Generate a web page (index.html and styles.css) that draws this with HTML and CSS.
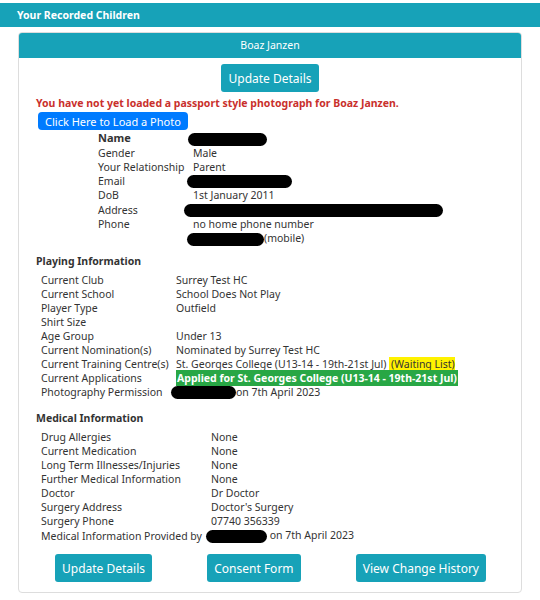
FILE: index.html
```html
<!DOCTYPE html>
<html lang="en">
<head>
    <meta charset="UTF-8">
    <title>Your Recorded Children</title>
    <link rel="stylesheet" href="styles.css">
</head>
<body>
    <div class="panel">
        <div class="panel-heading">Your Recorded Children</div>
        <div class="child-card">
            <div class="card-header">Boaz Janzen</div>
            <div class="card-body">
                <div class="center">
                    <button class="btn">Update Details</button>
                </div>
                <p class="warning">You have not yet loaded a passport style photograph for Boaz Janzen.</p>
                <button class="btn-photo">Click Here to Load a Photo</button>

                <table class="details">
                    <tr><td class="lbl"><strong>Name</strong></td><td><span class="redact r-name"></span></td></tr>
                    <tr><td class="lbl">Gender</td><td>Male</td></tr>
                    <tr><td class="lbl">Your Relationship</td><td>Parent</td></tr>
                    <tr><td class="lbl">Email</td><td><span class="redact r-email"></span></td></tr>
                    <tr><td class="lbl">DoB</td><td>1st January 2011</td></tr>
                    <tr><td class="lbl">Address</td><td><span class="redact r-address"></span></td></tr>
                    <tr><td class="lbl">Phone</td><td>no home phone number</td></tr>
                    <tr><td class="lbl"></td><td><span class="redact r-mobile"></span>(mobile)</td></tr>
                </table>

                <h4 class="playing-title">Playing Information</h4>
                <table class="info playing">
                    <tr><td class="lbl">Current Club</td><td>Surrey Test HC</td></tr>
                    <tr><td class="lbl">Current School</td><td>School Does Not Play</td></tr>
                    <tr><td class="lbl">Player Type</td><td>Outfield</td></tr>
                    <tr><td class="lbl">Shirt Size</td><td></td></tr>
                    <tr><td class="lbl">Age Group</td><td>Under 13</td></tr>
                    <tr><td class="lbl">Current Nomination(s)</td><td>Nominated by Surrey Test HC</td></tr>
                    <tr><td class="lbl">Current Training Centre(s)</td><td>St. Georges College (U13-14 - 19th-21st Jul) <span class="waiting">(Waiting List) </span></td></tr>
                    <tr><td class="lbl">Current Applications</td><td><span class="applied">Applied for St. Georges College (U13-14 - 19th-21st Jul)</span></td></tr>
                    <tr><td class="lbl">Photography Permission</td><td><span class="redact r-photo"></span>on 7th April 2023</td></tr>
                </table>

                <h4 class="medical-title">Medical Information</h4>
                <table class="info medical">
                    <tr><td class="lbl">Drug Allergies</td><td>None</td></tr>
                    <tr><td class="lbl">Current Medication</td><td>None</td></tr>
                    <tr><td class="lbl">Long Term Illnesses/Injuries</td><td>None</td></tr>
                    <tr><td class="lbl">Further Medical Information</td><td>None</td></tr>
                    <tr><td class="lbl">Doctor</td><td>Dr Doctor</td></tr>
                    <tr><td class="lbl">Surgery Address</td><td>Doctor's Surgery</td></tr>
                    <tr><td class="lbl">Surgery Phone</td><td>07740 356339</td></tr>
                    <tr><td class="lbl">Medical Information Provided by</td><td><span class="redact r-medical"></span> on 7th April 2023</td></tr>
                </table>

                <div class="actions">
                    <button class="btn">Update Details</button>
                    <button class="btn">Consent Form</button>
                    <button class="btn">View Change History</button>
                </div>
            </div>
        </div>
    </div>
</body>
</html>
```

FILE: styles.css
```css
body {
    font-family: "Noto Sans", "Open Sans", sans-serif;
    font-size: 10.5px;
    color: #333;
    background-color: #fff;
    margin: 0;
    padding: 3px 0 0 0;
}
.panel {
    border-bottom: 1px solid #ddd;
    padding-bottom: 7px;
}
.panel-heading {
    background-color: #17a2b8;
    color: #fff;
    font-weight: bold;
    height: 24px;
    line-height: 24px;
    padding-left: 17px;
}
.child-card {
    margin: 5px 18px 0 18px;
    border: 1px solid #ddd;
    border-radius: 4px;
}
.card-header {
    background-color: #17a2b8;
    color: #fff;
    text-align: center;
    height: 25px;
    line-height: 25px;
    border-radius: 3px 3px 0 0;
}
.card-body {
    padding: 6px 17px 10px 17px;
}
.center {
    text-align: center;
}
.btn {
    font-family: "Noto Sans", "Open Sans", sans-serif;
    background-color: #17a2b8;
    color: #fff;
    border: none;
    border-radius: 3px;
    font-size: 12px;
    padding: 0 7px;
    height: 28px;
}
.warning {
    color: #c9302c;
    font-weight: bold;
    margin: 3px 0 1px 0;
    line-height: 16px;
}
.btn-photo {
    font-family: "Noto Sans", "Open Sans", sans-serif;
    background-color: #007bff;
    color: #fff;
    border: none;
    border-radius: 4px;
    font-size: 11px;
    height: 18px;
    padding: 0 7px;
    margin-left: 2px;
}
table {
    border-collapse: collapse;
}
td {
    padding: 0;
    height: 14px;
    line-height: 14px;
    vertical-align: middle;
    white-space: nowrap;
}
.details {
    margin-left: 62px;
    margin-top: 1px;
}
.details .lbl {
    width: 95px;
}
.details strong {
    font-size: 11px;
    line-height: 14px;
}
h4 {
    font-size: 10.5px;
    font-weight: bold;
    margin: 0 0 5px 0;
}
.playing-title {
    margin-top: 8px;
}
.medical-title {
    margin-top: 12px;
}
.info {
    margin-left: 5px;
}
.playing .lbl {
    width: 135px;
}
.medical .lbl {
    width: 170px;
}
.redact {
    display: inline-block;
    background-color: #000;
    border-radius: 7px;
    height: 13px;
    vertical-align: middle;
}
.r-name { width: 79px; margin-left: -5px; }
.r-email { width: 105px; margin-left: -6px; }
.r-address { width: 259px; margin-left: -9px; }
.r-mobile { width: 77px; margin-left: -6px; }
.r-photo { width: 65px; margin-left: -5px; }
.r-medical { width: 61px; margin-left: -5px; }
.waiting {
    background-color: #fff200;
    padding-left: 2px;
}
.applied {
    background-color: #28a745;
    color: #fff;
    font-weight: bold;
    padding: 1px 1px;
}
.actions {
    display: flex;
    justify-content: space-between;
    padding: 11px 18px 0 19px;
}
```
